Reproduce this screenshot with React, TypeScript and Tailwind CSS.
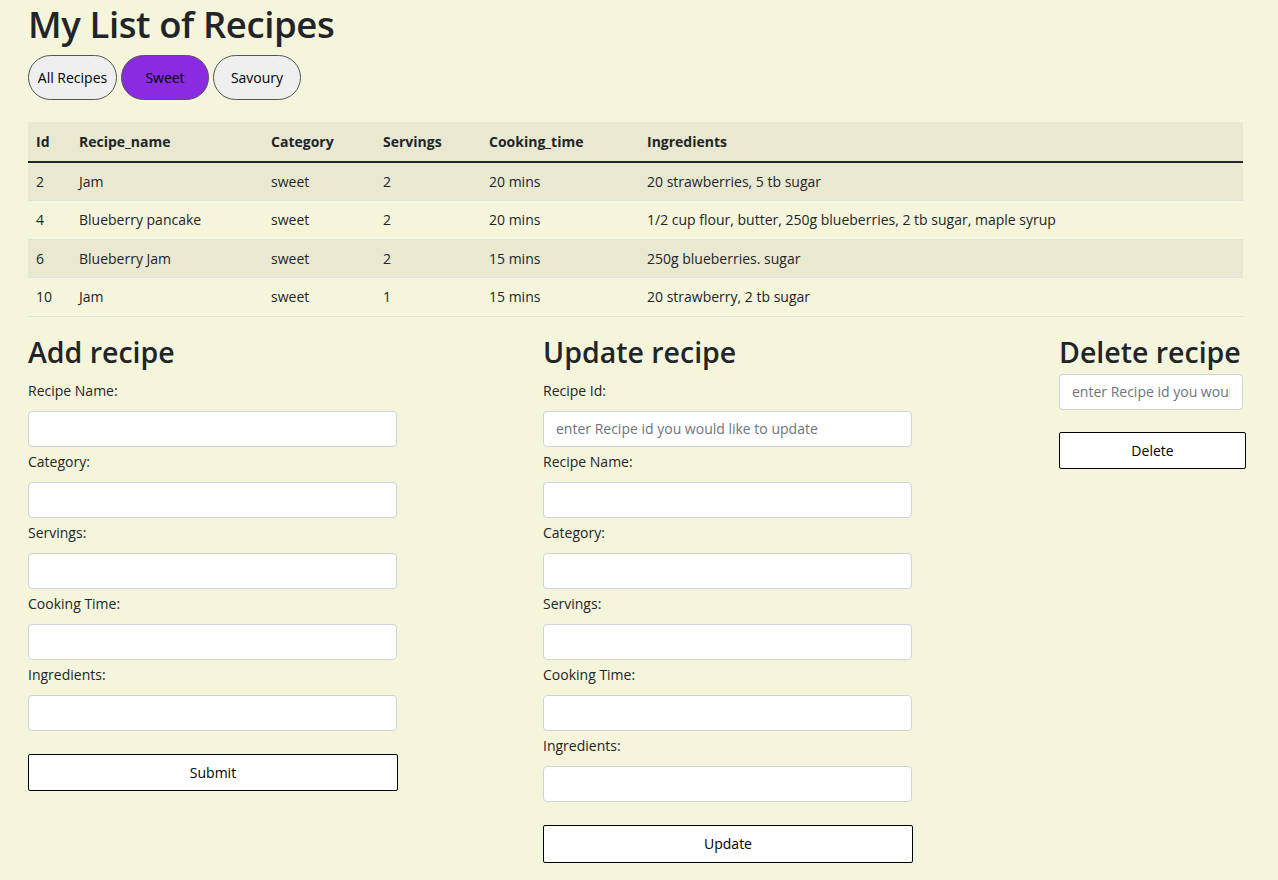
import { useState } from "react";

type Recipe = {
    id: number;
    name: string;
    category: string;
    servings: number;
    time: string;
    ingredients: string;
};

const recipes: Recipe[] = [
    { id: 2, name: "Jam", category: "sweet", servings: 2, time: "20 mins", ingredients: "20 strawberries, 5 tb sugar" },
    { id: 4, name: "Blueberry pancake", category: "sweet", servings: 2, time: "20 mins", ingredients: "1/2 cup flour, butter, 250g blueberries, 2 tb sugar, maple syrup" },
    { id: 6, name: "Blueberry Jam", category: "sweet", servings: 2, time: "15 mins", ingredients: "250g blueberries. sugar" },
    { id: 10, name: "Jam", category: "sweet", servings: 1, time: "15 mins", ingredients: "20 strawberry, 2 tb sugar" },
];

const fontStack = { fontFamily: '"Open Sans", "Noto Sans", sans-serif' };

function Field({ label, placeholder }: { label: string; placeholder?: string }) {
    return (
        <div className="flex flex-col">
            <label className="text-[14px] leading-6 text-[#212529] mb-[8px] pt-[3px]">{label}</label>
            <input
                className="h-9 w-[369px] bg-white border border-[#ced4da] rounded-[4px] px-3 text-[14px] text-[#212529] placeholder:text-[#6c757d] outline-none"
                placeholder={placeholder}
            />
        </div>
    );
}

function ActionButton({ children, className = "" }: { children: string; className?: string }) {
    return (
        <button className={`bg-white border border-black rounded-[2px] text-[14px] text-black ${className}`}>
            {children}
        </button>
    );
}

export default function App() {
    const [filter, setFilter] = useState("Sweet");
    const tabs = ["All Recipes", "Sweet", "Savoury"];

    return (
        <div className="min-h-[880px] bg-[#f5f5dc] text-[#212529] overflow-hidden" style={fontStack}>
            <div className="w-[1215px] ml-[28px]">
                <h1 className="text-[36.5px] leading-[48px] font-semibold tracking-[-0.4px] mb-[7px] whitespace-nowrap">My List of Recipes</h1>

                <div className="flex gap-1 mb-[22px]">
                    {tabs.map((t) => (
                        <button
                            key={t}
                            onClick={() => setFilter(t)}
                            className={`h-[45px] rounded-full border border-[#555] text-[14px] text-black ${
                                t === "All Recipes" ? "w-[89px]" : "w-[88px]"
                            } ${filter === t ? "bg-[#8a2be2]" : "bg-[#efefef]"}`}
                        >
                            {t}
                        </button>
                    ))}
                </div>

                <table className="w-full border-collapse text-[14px] mb-4">
                    <thead>
                        <tr className="bg-[#e9e9d1] border-b-2 border-[#212529]">
                            <th className="w-[43px] h-[40px] px-2 text-left font-bold">Id</th>
                            <th className="w-[192px] px-2 text-left font-bold">Recipe_name</th>
                            <th className="w-[112px] px-2 text-left font-bold">Category</th>
                            <th className="w-[106px] px-2 text-left font-bold">Servings</th>
                            <th className="w-[158px] px-2 text-left font-bold">Cooking_time</th>
                            <th className="px-2 text-left font-bold">Ingredients</th>
                        </tr>
                    </thead>
                    <tbody>
                        {recipes.map((r, i) => (
                            <tr key={r.id} className={`border-b border-[#dee2e6] ${i % 2 === 0 ? "bg-[#e9e9d1]" : ""}`}>
                                <td className="h-[38.5px] px-2">{r.id}</td>
                                <td className="px-2">{r.name}</td>
                                <td className="px-2">{r.category}</td>
                                <td className="px-2">{r.servings}</td>
                                <td className="px-2">{r.time}</td>
                                <td className="px-2">{r.ingredients}</td>
                            </tr>
                        ))}
                    </tbody>
                </table>

                <div className="flex">
                    <div className="w-[515px] shrink-0 flex flex-col">
                        <h2 className="text-[28.5px] leading-[38px] font-semibold mb-[5px]">Add recipe</h2>
                        <div className="flex flex-col gap-0">
                            <Field label="Recipe Name:" />
                            <Field label="Category:" />
                            <Field label="Servings:" />
                            <Field label="Cooking Time:" />
                            <Field label="Ingredients:" />
                        </div>
                        <ActionButton className="mt-[23px] w-[370px] h-[37px]">Submit</ActionButton>
                    </div>

                    <div className="w-[516px] shrink-0 flex flex-col">
                        <h2 className="text-[28.5px] leading-[38px] font-semibold mb-[5px]">Update recipe</h2>
                        <div className="flex flex-col gap-0">
                            <Field label="Recipe Id:" placeholder="enter Recipe id you would like to update" />
                            <Field label="Recipe Name:" />
                            <Field label="Category:" />
                            <Field label="Servings:" />
                            <Field label="Cooking Time:" />
                            <Field label="Ingredients:" />
                        </div>
                        <ActionButton className="mt-[23px] w-[370px] h-[38px]">Update</ActionButton>
                    </div>

                    <div className="shrink-0 flex flex-col">
                        <h2 className="text-[28.5px] leading-[38px] font-semibold mb-[3px] whitespace-nowrap">Delete recipe</h2>
                        <input
                            className="h-9 w-[184px] bg-white border border-[#ced4da] rounded-[4px] px-3 text-[14px] placeholder:text-[#6c757d] outline-none"
                            placeholder="enter Recipe id you would like to delete"
                        />
                        <ActionButton className="mt-[22px] w-[187px] h-[37px]">Delete</ActionButton>
                    </div>
                </div>
            </div>
        </div>
    );
}
